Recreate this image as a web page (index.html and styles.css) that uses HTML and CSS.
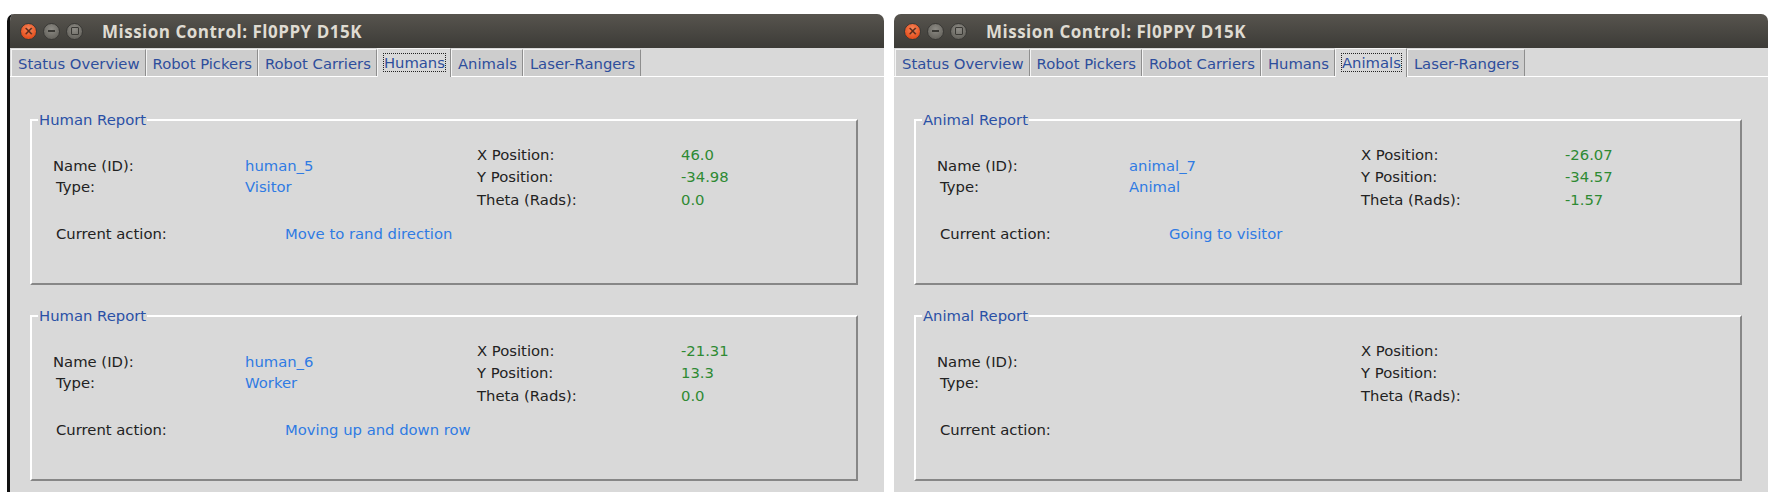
FILE: index.html
```html
<!DOCTYPE html>
<html>
<head>
<meta charset="utf-8">
<link rel="stylesheet" href="styles.css">
</head>
<body>
<div class="screen">
  <div class="window focused">
    <div class="titlebar">
      <div class="wbtns">
        <span class="wbtn close">&#215;</span>
        <span class="wbtn min"><span class="bar"></span></span>
        <span class="wbtn max"><span class="box"></span></span>
      </div>
      <div class="title">Mission Control: Fl0PPY D15K</div>
    </div>
    <div class="tabbar">
      <div class="tab">Status Overview</div>
      <div class="tab">Robot Pickers</div>
      <div class="tab">Robot Carriers</div>
      <div class="tab active"><span class="focus">Humans</span></div>
      <div class="tab">Animals</div>
      <div class="tab">Laser-Rangers</div>
    </div>
    <div class="content">
      <fieldset class="report">
        <legend>Human Report</legend>
        <div class="report-body">
          <div class="left">
            <div class="idgrid">
              <span class="lbl">Name (ID):</span><span class="val blue">human_5</span>
              <span class="lbl ind">Type:</span><span class="val blue">Visitor</span>
            </div>
            <div class="action">
              <span class="lbl ind act-lbl">Current action:</span><span class="val blue">Move to rand direction</span>
            </div>
          </div>
          <div class="posgrid">
            <span class="lbl">X Position:</span><span class="val green">46.0</span>
            <span class="lbl">Y Position:</span><span class="val green">-34.98</span>
            <span class="lbl">Theta (Rads):</span><span class="val green">0.0</span>
          </div>
        </div>
      </fieldset>
      <fieldset class="report">
        <legend>Human Report</legend>
        <div class="report-body">
          <div class="left">
            <div class="idgrid">
              <span class="lbl">Name (ID):</span><span class="val blue">human_6</span>
              <span class="lbl ind">Type:</span><span class="val blue">Worker</span>
            </div>
            <div class="action">
              <span class="lbl ind act-lbl">Current action:</span><span class="val blue">Moving up and down row</span>
            </div>
          </div>
          <div class="posgrid">
            <span class="lbl">X Position:</span><span class="val green">-21.31</span>
            <span class="lbl">Y Position:</span><span class="val green">13.3</span>
            <span class="lbl">Theta (Rads):</span><span class="val green">0.0</span>
          </div>
        </div>
      </fieldset>
    </div>
  </div>

  <div class="window">
    <div class="titlebar">
      <div class="wbtns">
        <span class="wbtn close">&#215;</span>
        <span class="wbtn min"><span class="bar"></span></span>
        <span class="wbtn max"><span class="box"></span></span>
      </div>
      <div class="title">Mission Control: Fl0PPY D15K</div>
    </div>
    <div class="tabbar">
      <div class="tab">Status Overview</div>
      <div class="tab">Robot Pickers</div>
      <div class="tab">Robot Carriers</div>
      <div class="tab">Humans</div>
      <div class="tab active"><span class="focus">Animals</span></div>
      <div class="tab">Laser-Rangers</div>
    </div>
    <div class="content">
      <fieldset class="report">
        <legend>Animal Report</legend>
        <div class="report-body">
          <div class="left">
            <div class="idgrid">
              <span class="lbl">Name (ID):</span><span class="val blue">animal_7</span>
              <span class="lbl ind">Type:</span><span class="val blue">Animal</span>
            </div>
            <div class="action">
              <span class="lbl ind act-lbl">Current action:</span><span class="val blue">Going to visitor</span>
            </div>
          </div>
          <div class="posgrid">
            <span class="lbl">X Position:</span><span class="val green">-26.07</span>
            <span class="lbl">Y Position:</span><span class="val green">-34.57</span>
            <span class="lbl">Theta (Rads):</span><span class="val green">-1.57</span>
          </div>
        </div>
      </fieldset>
      <fieldset class="report">
        <legend>Animal Report</legend>
        <div class="report-body">
          <div class="left">
            <div class="idgrid">
              <span class="lbl">Name (ID):</span><span class="val blue"></span>
              <span class="lbl ind">Type:</span><span class="val blue"></span>
            </div>
            <div class="action">
              <span class="lbl ind act-lbl">Current action:</span><span class="val blue"></span>
            </div>
          </div>
          <div class="posgrid">
            <span class="lbl">X Position:</span><span class="val green"></span>
            <span class="lbl">Y Position:</span><span class="val green"></span>
            <span class="lbl">Theta (Rads):</span><span class="val green"></span>
          </div>
        </div>
      </fieldset>
    </div>
  </div>
</div>
</body>
</html>
```
FILE: styles.css
```css
html, body {
  margin: 0;
  padding: 0;
  background: #ffffff;
}

.screen {
  display: flex;
  gap: 10px;
  padding: 14px 0 0 7px;
  font-family: "DejaVu Sans", sans-serif;
  font-size: 14.8px;
}

.window {
  width: 874px;
  height: 478px;
  display: flex;
  flex-direction: column;
  background: #d9d9d9;
  border-radius: 7px 7px 0 0;
  overflow: hidden;
}

.window.focused {
  border-left: 3px solid #111111;
}

/* ---------- title bar ---------- */
.titlebar {
  height: 34px;
  flex: none;
  display: flex;
  align-items: center;
  background: linear-gradient(#57544e, #3c3b37);
}

.wbtns {
  display: flex;
  gap: 6px;
  padding-left: 10px;
  width: 82px;
}

.wbtn {
  width: 17px;
  height: 17px;
  border-radius: 50%;
  display: flex;
  align-items: center;
  justify-content: center;
  box-sizing: border-box;
}

.wbtn.close {
  background: radial-gradient(circle at 50% 35%, #f88a5e, #e5501f 70%);
  color: #5a2a18;
  font-size: 12px;
  font-weight: bold;
  line-height: 1;
  border: 1px solid #3a3936;
}

.wbtn.min, .wbtn.max {
  background: radial-gradient(circle at 50% 35%, #8e8c86, #67655f 75%);
  border: 1px solid #3a3936;
}

.wbtn .bar {
  width: 7px;
  height: 2px;
  background: #3a3935;
}

.wbtn .box {
  width: 6px;
  height: 6px;
  border: 1.5px solid #3a3935;
  border-radius: 1px;
}

.title {
  font-family: "Open Sans", sans-serif;
  font-weight: 700;
  font-size: 17px;
  color: #dfdbd2;
  letter-spacing: 0.5px;
  padding-top: 1px;
}

/* ---------- tabs ---------- */
.tabbar {
  height: 29px;
  flex: none;
  display: flex;
  align-items: flex-end;
  padding-left: 1px;
  background: #d9d9d9;
  border-bottom: 1px solid #ffffff;
  box-sizing: border-box;
}

.tab {
  height: 27px;
  box-sizing: border-box;
  padding: 0 5px 0 6px;
  display: flex;
  align-items: center;
  background: #cdcdcd;
  color: #2d4e9c;
  border-top: 1px solid #f4f4f4;
  border-left: 1px solid #f4f4f4;
  border-right: 1px solid #8e8e8e;
  white-space: nowrap;
}

.tab.active {
  height: 29px;
  background: #d9d9d9;
  margin-bottom: -1px;
  padding-bottom: 1px;
}

.focus {
  outline: 1px dotted #222222;
  outline-offset: 0;
  line-height: 17px;
}

/* ---------- content ---------- */
.content {
  flex: 1;
  padding: 34px 26px 0 20px;
  display: flex;
  flex-direction: column;
  gap: 22px;
}

.report {
  margin: 0;
  padding: 0;
  border: 2px solid;
  border-color: #ffffff #878787 #878787 #ffffff;
  height: 174px;
  box-sizing: border-box;
}

.report legend {
  color: #2a50a6;
  padding: 0 1px;
  margin-left: 6px;
  line-height: 17px;
}

.report-body {
  display: flex;
  align-items: flex-start;
  padding: 15px 0 0 21px;
}

.left {
  width: 424px;
  padding-top: 12px;
}

.idgrid {
  display: grid;
  grid-template-columns: 192px auto;
  grid-auto-rows: 21px;
  align-items: center;
}

.action {
  display: flex;
  align-items: center;
  height: 21px;
  margin-top: 26px;
}

.act-lbl {
  width: 229px;
  flex: none;
}

.posgrid {
  display: grid;
  grid-template-columns: 204px auto;
  grid-auto-rows: 22.5px;
  align-items: center;
}

.lbl {
  color: #222222;
  white-space: nowrap;
}

.ind {
  margin-left: 3px;
}

.val {
  white-space: nowrap;
}

.blue {
  color: #2f7be3;
}

.green {
  color: #2e8a33;
}
```
